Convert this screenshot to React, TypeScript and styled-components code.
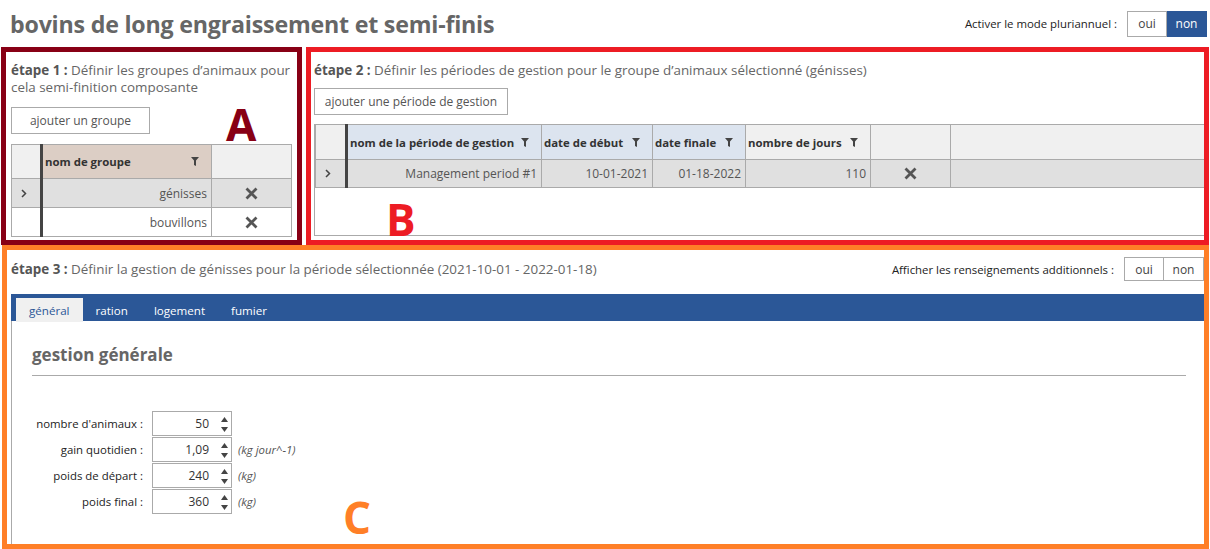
import React from 'react'
import styled, { createGlobalStyle } from 'styled-components'

const GlobalStyle = createGlobalStyle`
	html, body {
		margin: 0;
		padding: 0;
		background: #fff;
	}
	body {
		font-family: 'Segoe UI', 'Open Sans', 'Noto Sans', sans-serif;
		font-size: 11.4px;
		color: #333;
	}
`

const BLUE = '#2b5797'

type Period = { name: string; start: string; end: string; days: number }

const groups = ['génisses', 'bouvillons']
const periods: Period[] = [{ name: 'Management period #1', start: '10-01-2021', end: '01-18-2022', days: 110 }]
const tabs = ['général', 'ration', 'logement', 'fumier']
const fields = [
	{ label: "nombre d'animaux :", value: '50', unit: '' },
	{ label: 'gain quotidien :', value: '1,09', unit: '(kg jour^-1)' },
	{ label: 'poids de départ :', value: '240', unit: '(kg)' },
	{ label: 'poids final :', value: '360', unit: '(kg)' },
]

const FilterIcon = () => (
	<svg width="8" height="9" viewBox="0 0 8 9">
		<path d="M0 0h8L5 3.5V9L3 8V3.5z" fill="#444" />
	</svg>
)

const DeleteIcon = () => (
	<svg width="13" height="13" viewBox="0 0 13 13">
		<path d="M1.5 1.5l10 10M11.5 1.5l-10 10" stroke="#555" strokeWidth="2.8" />
	</svg>
)

const Chevron = () => (
	<svg width="6" height="9" viewBox="0 0 6 9">
		<path d="M1 1l3.5 3.5L1 8" stroke="#444" strokeWidth="1.5" fill="none" />
	</svg>
)

const Spinner = () => (
	<SpinBox>
		<svg width="7" height="5" viewBox="0 0 7 5">
			<path d="M3.5 0L7 5H0z" fill="#444" />
		</svg>
		<svg width="7" height="5" viewBox="0 0 7 5">
			<path d="M0 0h7L3.5 5z" fill="#444" />
		</svg>
	</SpinBox>
)

export default function App(): JSX.Element {
	return (
		<Page>
			<GlobalStyle />
			<Header>
				<Title>bovins de long engraissement et semi-finis</Title>
				<Toggle>
					<ToggleLabel>Activer le mode pluriannuel :</ToggleLabel>
					<ToggleButton $h={26}>oui</ToggleButton>
					<ToggleButton $h={26} $active>
						non
					</ToggleButton>
				</Toggle>
			</Header>

			<TopRow>
				<Panel $color="#880015" $width={301} $pad={5}>
					<StepText>
						<b>étape 1 :</b> Définir les groupes d’animaux pour cela semi-finition composante
					</StepText>
					<ActionButton $width={139} $mt={11} $mb={10}>
						ajouter un groupe
					</ActionButton>
					<Grid $width={280}>
						<colgroup>
							<col style={{ width: 30 }} />
							<col style={{ width: 170 }} />
							<col style={{ width: 80 }} />
						</colgroup>
						<thead>
							<tr>
								<HeadCell />
								<HeadCell $bar $tint="#dccec5">
									<HeadInner>
										nom de groupe
										<FilterIcon />
									</HeadInner>
								</HeadCell>
								<HeadCell />
							</tr>
						</thead>
						<tbody>
							{groups.map((g, i) => (
								<Row key={g} $h={29} $selected={i === 0}>
									<SelectorCell>{i === 0 && <Chevron />}</SelectorCell>
									<Cell $bar>{g}</Cell>
									<IconCell>
										<DeleteIcon />
									</IconCell>
								</Row>
							))}
						</tbody>
					</Grid>
					<Letter $color="#880015" style={{ left: 220, top: 54 }}>
						A
					</Letter>
				</Panel>

				<Panel $color="#ed1c24" $width={903} $pad={3}>
					<StepText>
						<b>étape 2 :</b> Définir les périodes de gestion pour le groupe d’animaux sélectionné (génisses)
					</StepText>
					<ActionButton $width={194} $mt={9} $mb={9}>
						ajouter une période de gestion
					</ActionButton>
					<GridFrame>
						<Grid>
							<colgroup>
								<col style={{ width: 31 }} />
								<col style={{ width: 195 }} />
								<col style={{ width: 111 }} />
								<col style={{ width: 93 }} />
								<col style={{ width: 125 }} />
								<col style={{ width: 80 }} />
								<col />
							</colgroup>
							<thead>
								<tr>
									<HeadCell $h={34} />
									<HeadCell $h={34} $bar $tint="#dce4ef">
										<HeadInner>
											nom de la période de gestion
											<FilterIcon />
										</HeadInner>
									</HeadCell>
									<HeadCell $h={34} $tint="#dce4ef">
										<HeadInner>
											date de début
											<FilterIcon />
										</HeadInner>
									</HeadCell>
									<HeadCell $h={34} $tint="#dce4ef">
										<HeadInner>
											date finale
											<FilterIcon />
										</HeadInner>
									</HeadCell>
									<HeadCell $h={34}>
										<HeadInner>
											nombre de jours
											<FilterIcon />
										</HeadInner>
									</HeadCell>
									<HeadCell $h={34} />
									<HeadCell $h={34} />
								</tr>
							</thead>
							<tbody>
								{periods.map((p) => (
									<Row key={p.name} $h={28} $selected>
										<SelectorCell>
											<Chevron />
										</SelectorCell>
										<Cell $bar>{p.name}</Cell>
										<Cell>{p.start}</Cell>
										<Cell>{p.end}</Cell>
										<Cell>{p.days}</Cell>
										<IconCell>
											<DeleteIcon />
										</IconCell>
										<Cell />
									</Row>
								))}
							</tbody>
						</Grid>
					</GridFrame>
					<Letter $color="#ed1c24" style={{ left: 75, top: 149 }}>
						B
					</Letter>
				</Panel>
			</TopRow>

			<BottomPanel>
				<StepRow>
					<StepText as="div">
						<b>étape 3 :</b> Définir la gestion de génisses pour la période sélectionnée (2021-10-01 - 2022-01-18)
					</StepText>
					<Toggle>
						<ToggleLabel>Afficher les renseignements additionnels :</ToggleLabel>
						<ToggleButton $h={24}>oui</ToggleButton>
						<ToggleButton $h={24}>non</ToggleButton>
					</Toggle>
				</StepRow>
				<TabBar>
					{tabs.map((t, i) => (
						<Tab key={t} $active={i === 0}>
							{t}
						</Tab>
					))}
				</TabBar>
				<TabContent>
					<SectionTitle>gestion générale</SectionTitle>
					<Form>
						{fields.map((f) => (
							<React.Fragment key={f.label}>
								<FieldLabel>{f.label}</FieldLabel>
								<NumberBox>
									<span>{f.value}</span>
									<Spinner />
								</NumberBox>
								<Unit>{f.unit}</Unit>
							</React.Fragment>
						))}
					</Form>
					<Letter $color="#ff7f27" style={{ left: 331, top: 178 }}>
						C
					</Letter>
				</TabContent>
			</BottomPanel>
		</Page>
	)
}

const Page = styled.div`
	width: 1210px;
	height: 549px;
	overflow: hidden;
	display: flex;
	flex-direction: column;
`

const Header = styled.header`
	height: 47px;
	display: flex;
	align-items: center;
	justify-content: space-between;
	padding: 0 3px 0 10px;
	box-sizing: border-box;
`

const Title = styled.h1`
	margin: 0;
	font-size: 23.2px;
	font-weight: 700;
	color: #666;
	letter-spacing: -0.2px;
`

const Toggle = styled.div`
	display: flex;
	align-items: center;
`

const ToggleLabel = styled.span`
	color: #222;
	margin-right: 10px;
`

const ToggleButton = styled.div<{ $active?: boolean; $h: number }>`
	width: 40px;
	height: ${({ $h }) => $h}px;
	box-sizing: border-box;
	display: flex;
	align-items: center;
	justify-content: center;
	font-size: 12px;
	border: 1px solid ${({ $active }) => ($active ? BLUE : '#aaa')};
	background: ${({ $active }) => ($active ? BLUE : '#fff')};
	color: ${({ $active }) => ($active ? '#fff' : '#444')};
	& + & {
		border-left: ${({ $active }) => ($active ? `1px solid ${BLUE}` : 'none')};
	}
`

const TopRow = styled.div`
	height: 198px;
	display: flex;
	gap: 4px;
	padding-left: 1px;
`

const Panel = styled.section<{ $color: string; $width: number; $pad: number }>`
	position: relative;
	width: ${({ $width }) => $width}px;
	box-sizing: border-box;
	border: 5px solid ${({ $color }) => $color};
	padding: 10px 0 0 ${({ $pad }) => $pad}px;
	display: flex;
	flex-direction: column;
	align-items: flex-start;
	overflow: hidden;
`

const StepText = styled.p`
	margin: 0;
	font-size: 13.4px;
	line-height: 17px;
	color: #666;
	b {
		color: #555;
	}
`

const ActionButton = styled.div<{ $width: number; $mt: number; $mb: number }>`
	width: ${({ $width }) => $width}px;
	height: 27px;
	box-sizing: border-box;
	margin: ${({ $mt, $mb }) => `${$mt}px 0 ${$mb}px`};
	border: 1px solid #aaa;
	display: flex;
	align-items: center;
	justify-content: center;
	font-size: 12px;
	color: #555;
	background: #fff;
`

const Grid = styled.table<{ $width?: number }>`
	width: ${({ $width }) => ($width ? `${$width}px` : '100%')};
	border-collapse: collapse;
	table-layout: fixed;
	border: 1px solid #aaa;
`

const GridFrame = styled.div`
	width: 892px;
	height: 112px;
	box-sizing: border-box;
	border-bottom: 1px solid #aaa;
	border-left: 1px solid #aaa;

	${Grid} {
		border-left: none;
		border-bottom: none;
	}
`

const HeadCell = styled.th<{ $bar?: boolean; $tint?: string; $h?: number }>`
	height: ${({ $h }) => $h ?? 33}px;
	padding: 0 12px 0 2px;
	background: ${({ $tint }) => $tint ?? '#f0f0f0'};
	border: 1px solid #aaa;
	border-left: ${({ $bar }) => ($bar ? '3px solid #444' : '1px solid #aaa')};
	text-align: left;
	font-weight: 700;
	color: #333;
	white-space: nowrap;
`

const HeadInner = styled.div`
	display: flex;
	align-items: center;
	justify-content: space-between;
`

const Row = styled.tr<{ $selected?: boolean; $h: number }>`
	height: ${({ $h }) => $h}px;
	background: ${({ $selected }) => ($selected ? '#e0e0e0' : '#fff')};
`

const Cell = styled.td<{ $bar?: boolean }>`
	padding: 0 4px 0 3px;
	border: 1px solid #aaa;
	border-left: ${({ $bar }) => ($bar ? '3px solid #444' : '1px solid #aaa')};
	text-align: right;
	font-size: 12px;
	color: #555;
	white-space: nowrap;
`

const SelectorCell = styled.td`
	border: 1px solid #aaa;
	padding: 0 0 0 9px;
	line-height: 0;
`

const IconCell = styled.td`
	border: 1px solid #aaa;
	text-align: center;
	line-height: 0;
`

const Letter = styled.span<{ $color: string }>`
	position: absolute;
	font-family: 'Open Sans', sans-serif;
	font-weight: 700;
	font-size: 44px;
	line-height: 36px;
	color: ${({ $color }) => $color};
	pointer-events: none;
`

const BottomPanel = styled.section`
	margin-left: 2px;
	width: 1207px;
	flex: 1;
	box-sizing: border-box;
	border: 5px solid #ff7f27;
	padding-left: 4px;
	display: flex;
	flex-direction: column;
	overflow: hidden;
`

const StepRow = styled.div`
	height: 24px;
	margin: 7px 0 13px;
	display: flex;
	align-items: center;
	justify-content: space-between;
`

const TabBar = styled.nav`
	height: 27px;
	background: ${BLUE};
	display: flex;
	align-items: flex-end;
	padding-left: 5px;
`

const Tab = styled.div<{ $active?: boolean }>`
	height: 24px;
	padding: 0 13px;
	display: flex;
	align-items: center;
	font-size: 11.6px;
	background: ${({ $active }) => ($active ? '#f0f0f0' : 'transparent')};
	color: ${({ $active }) => ($active ? BLUE : '#fff')};
	margin-bottom: -1px;
`

const TabContent = styled.div`
	position: relative;
	flex: 1;
	border-left: 1px solid #aaa;
	padding: 22px 18px 0 20px;
`

const SectionTitle = styled.h2`
	margin: 0;
	font-size: 17px;
	line-height: 24px;
	font-weight: 700;
	color: #666;
	padding-bottom: 8px;
	border-bottom: 1px solid #aaa;
`

const Form = styled.div`
	margin: 35px 0 0 -20px;
	display: grid;
	grid-template-columns: 140px 80px auto;
	row-gap: 1px;
	align-items: center;
	justify-content: start;
`

const FieldLabel = styled.span`
	text-align: right;
	padding-right: 9px;
	color: #222;
`

const NumberBox = styled.div`
	height: 25px;
	box-sizing: border-box;
	width: 80px;
	border: 1px solid #aaa;
	display: flex;
	align-items: center;
	justify-content: flex-end;
	font-size: 12px;
	color: #333;
	span {
		margin-right: 8px;
	}
`

const SpinBox = styled.div`
	width: 14px;
	height: 100%;
	display: flex;
	flex-direction: column;
	align-items: center;
	justify-content: space-between;
	padding: 5px 0 3px;
	box-sizing: border-box;
`

const Unit = styled.span`
	margin-left: 6px;
	font-style: italic;
	color: #555;
`
